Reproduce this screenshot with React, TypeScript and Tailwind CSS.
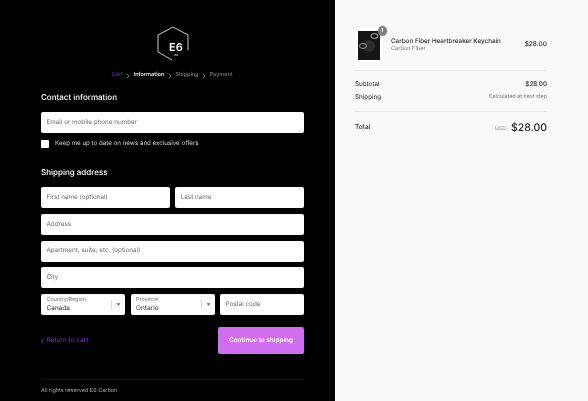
import React from "react";

function Field({ label, className = "" }: { label: string; className?: string }) {
  return (
    <div className={`h-[21px] bg-white rounded-[2px] flex items-center px-[5.5px] text-[6.3px] text-[#6e6e6e] ${className}`}>
      {label}
    </div>
  );
}

function SelectField({ label, value }: { label: string; value: string }) {
  return (
    <div className="h-[21px] bg-white rounded-[2px] flex items-center pl-[5.5px]">
      <div className="flex-1 flex flex-col leading-none">
        <span className="text-[5.4px] leading-[7px] text-[#737373]">{label}</span>
        <span className="text-[6.5px] leading-[8px] text-[#333]">{value}</span>
      </div>
      <div className="w-px h-[9px] bg-[#d9d9d9]" />
      <div className="w-[13px] flex justify-center">
        <svg width="5" height="3" viewBox="0 0 5 3"><path d="M0.5 0.3h4L2.5 2.8z" fill="#666" /></svg>
      </div>
    </div>
  );
}

function Chevron() {
  return (
    <svg width="4" height="6" viewBox="0 0 4 6" fill="none" stroke="#b5b5b5" strokeWidth="0.7"><path d="M0.8 0.8 3.2 3 0.8 5.2" /></svg>
  );
}

export default function App() {
  return (
    <div className="w-[588px] h-[401px] flex overflow-hidden [text-rendering:geometricPrecision] [will-change:transform]" style={{ fontFamily: "Inter, 'Liberation Sans', sans-serif" }}>
      <div className="w-[335px] h-full bg-black pl-[41px] pr-[31px] flex flex-col">
        <div className="h-[70px] pt-[26px] flex justify-center">
          <div className="relative w-[32px] h-[36px]">
            <svg width="32" height="36" viewBox="0 0 32 36" fill="none" stroke="#c9c9c9" strokeWidth="1" className="absolute inset-0">
              <path d="M31 24V9L16 1 1 9v17l14 8" />
            </svg>
            <div className="absolute left-[12.5px] top-[15.5px] text-white text-[11px] leading-[11px] font-semibold">E6</div>
            <div className="absolute left-[17px] top-[28px] text-white text-[3px] leading-[3px] font-semibold">.co</div>
          </div>
        </div>
        <div className="h-[11px] flex items-center justify-center gap-[3.5px] text-[5.6px] pr-[1px]">
          <span className="text-[#8b2be2]">Cart</span>
          <Chevron />
          <span className="text-white font-medium">Information</span>
          <Chevron />
          <span className="text-[#9a9a9a]">Shipping</span>
          <Chevron />
          <span className="text-[#8a8a8a]">Payment</span>
        </div>
        <div className="mt-[5px] h-[22px] text-white text-[8px] leading-[22px] font-medium">Contact information</div>
        <Field label="Email or mobile phone number" className="mt-[4px]" />
        <div className="mt-[6px] h-[9px] flex items-center gap-[6px]">
          <div className="w-[8px] h-[8px] bg-white rounded-[1px]" />
          <span className="text-[6.2px] text-[#dcdcdc]">Keep me up to date on news and exclusive offers</span>
        </div>
        <div className="mt-[13px] h-[22px] text-white text-[8px] leading-[22px] font-medium">Shipping address</div>
        <div className="mt-[4px] flex flex-col gap-[5.75px]">
          <div className="grid grid-cols-2 gap-[5.5px]">
            <Field label="First name (optional)" />
            <Field label="Last name" />
          </div>
          <Field label="Address" />
          <Field label="Apartment, suite, etc. (optional)" />
          <Field label="City" />
          <div className="grid grid-cols-3 gap-[5.5px]">
            <SelectField label="Country/Region" value="Canada" />
            <SelectField label="Province" value="Ontario" />
            <Field label="Postal code" />
          </div>
        </div>
        <div className="mt-[12px] flex items-center justify-between">
          <div className="flex items-center gap-[2.5px] text-[#8b2be2] text-[6.5px]">
            <svg width="3" height="6" viewBox="0 0 3 6" fill="none" stroke="#8b2be2" strokeWidth="0.8"><path d="M2.6 0.6 0.6 3l2 2.4" /></svg>
            Return to cart
          </div>
          <div className="w-[86px] h-[27px] rounded-[2px] bg-[#d06df0] text-white text-[6.4px] font-semibold flex items-center justify-center">
            Continue to shipping
          </div>
        </div>
        <div className="mt-[25px] h-px bg-[#141414]" />
        <div className="mt-[6.5px] text-[5.5px] leading-[9px] text-[#a8a8a8]">All rights reserved E6 Carbon</div>
      </div>
      <div className="flex-1 h-full bg-[#fafafa] pl-[20px] pr-[41px] flex flex-col text-[#2a2a2a]">
        <div className="pt-[28px] h-[71px] border-b border-[#e8e8e8] flex items-start">
          <div className="relative w-[28px] h-[34px] mr-[8px] shrink-0 bg-white rounded-[2px] flex items-center justify-center">
            <div className="w-[22px] h-[29px] bg-[#141414] overflow-hidden">
              <svg width="22" height="29" viewBox="0 0 22 29" fill="none">
                <rect width="22" height="29" fill="#161616" />
                <circle cx="11" cy="15" r="6" fill="#2c2c2c" />
                <ellipse cx="16.5" cy="5" rx="3.5" ry="2.5" stroke="#b5b5b5" strokeWidth="1" />
                <ellipse cx="5" cy="15" rx="3.5" ry="2.5" stroke="#999" strokeWidth="1" />
              </svg>
            </div>
            <div className="absolute -top-[2px] -right-[4px] w-[9.5px] h-[9.5px] rounded-full bg-[#808080] text-white text-[5.5px] font-semibold flex items-center justify-center">1</div>
          </div>
          <div className="flex-1 pt-[9px]">
            <div className="text-[6.3px] leading-[9px] font-medium">Carbon Fiber Heartbreaker Keychain</div>
            <div className="text-[5.6px] leading-[7px] text-[#777]">Carbon Fiber</div>
          </div>
          <div className="pt-[12px] text-[6.5px] leading-[9px] font-medium">$28.00</div>
        </div>
        <div className="pt-[7px] h-[41px] border-b border-[#e8e8e8] text-[6.3px]">
          <div className="h-[13px] flex items-center justify-between">
            <span>Subtotal</span>
            <span className="font-medium">$28.00</span>
          </div>
          <div className="h-[13px] flex items-center justify-between">
            <span>Shipping</span>
            <span className="text-[5.4px] text-[#737373]">Calculated at next step</span>
          </div>
        </div>
        <div className="mt-[7px] h-[18px] flex items-center justify-between">
          <span className="text-[6.5px] font-medium">Total</span>
          <div className="flex items-center gap-[5px]">
            <span className="text-[5.2px] leading-[8px] mt-[2px] text-[#8a8a8a]">USD</span>
            <span className="text-[10.5px] font-medium text-[#222]">$28.00</span>
          </div>
        </div>
      </div>
    </div>
  );
}
